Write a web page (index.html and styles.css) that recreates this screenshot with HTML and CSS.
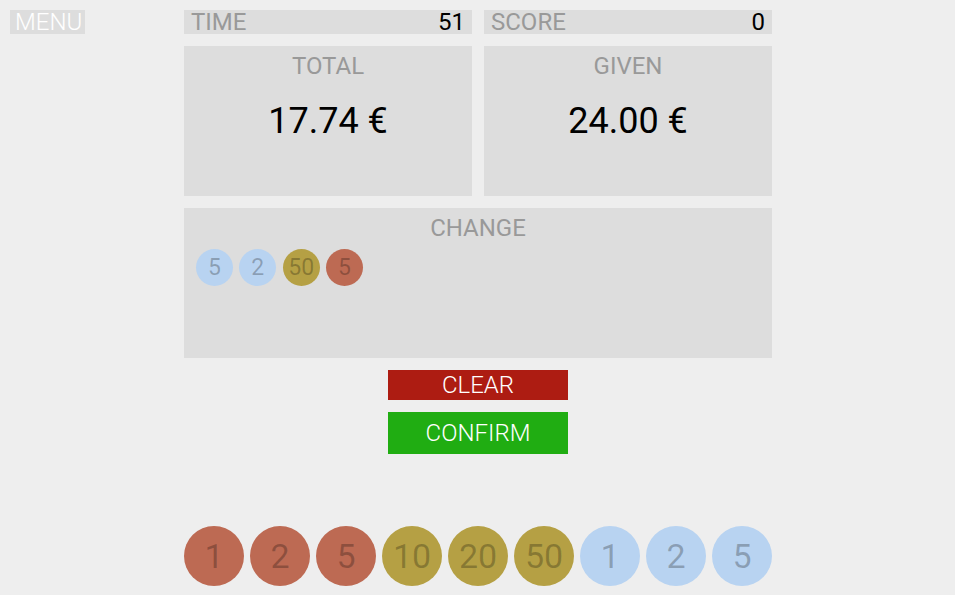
FILE: index.html
```html
<!DOCTYPE html>
<html>
<head>
<meta charset="utf-8">
<link rel="stylesheet" href="styles.css">
</head>
<body>
<div class="menu">MENU</div>
<main class="game">
  <div class="row">
    <div class="bar"><span class="bar-label">TIME</span><span class="bar-value">51</span></div>
    <div class="bar"><span class="bar-label">SCORE</span><span class="bar-value">0</span></div>
  </div>
  <div class="row">
    <div class="card">
      <div class="card-label">TOTAL</div>
      <div class="card-value">17.74 €</div>
    </div>
    <div class="card">
      <div class="card-label">GIVEN</div>
      <div class="card-value">24.00 €</div>
    </div>
  </div>
  <div class="card change">
    <div class="card-label">CHANGE</div>
    <div class="change-coins">
      <div class="coin small blue">5</div>
      <div class="coin small blue">2</div>
      <div class="coin small gold">50</div>
      <div class="coin small red">5</div>
    </div>
  </div>
  <div class="actions">
    <div class="btn clear">CLEAR</div>
    <div class="btn confirm">CONFIRM</div>
  </div>
  <div class="purse">
    <div class="coin big red">1</div>
    <div class="coin big red">2</div>
    <div class="coin big red">5</div>
    <div class="coin big gold">10</div>
    <div class="coin big gold">20</div>
    <div class="coin big gold">50</div>
    <div class="coin big blue">1</div>
    <div class="coin big blue">2</div>
    <div class="coin big blue">5</div>
  </div>
</main>
</body>
</html>
```
FILE: styles.css
```css
html, body {
  margin: 0;
  padding: 0;
  height: 100%;
}
body {
  background: #eeeeee;
  font-family: Roboto, "Liberation Sans", sans-serif;
  position: relative;
  overflow: hidden;
}
.menu {
  position: absolute;
  left: 10px;
  top: 10px;
  background: #dddddd;
  color: #ffffff;
  font-weight: 300;
  font-size: 24px;
  line-height: 24px;
  padding: 0 5px;
  width: 65px;
  box-sizing: content-box;
}
.game {
  width: 588px;
  margin: 0 auto;
  padding-top: 10px;
  display: flex;
  flex-direction: column;
  gap: 12px;
  position: relative;
  left: 0.5px;
}
.row {
  display: flex;
  gap: 12px;
}
.bar {
  flex: 1;
  height: 24px;
  background: #dddddd;
  display: flex;
  justify-content: space-between;
  padding: 0 7px;
  font-size: 24px;
  line-height: 24px;
}
.bar-label {
  color: #999999;
}
.bar-value {
  color: #000000;
}
.card {
  flex: 1;
  height: 150px;
  box-sizing: border-box;
  background: #dddddd;
  padding-top: 6px;
  text-align: center;
}
.card.change {
  flex: none;
}
.card-label {
  color: #999999;
  font-size: 24px;
  line-height: 28px;
}
.card-value {
  margin-top: 20px;
  font-size: 36px;
  line-height: 42px;
  color: #000000;
}
.change-coins {
  display: flex;
  gap: 6.33px;
  padding: 0 12px;
  margin-top: 7px;
}
.coin {
  border-radius: 50%;
  text-align: center;
  color: rgba(0, 0, 0, 0.25);
  flex: none;
}
.coin.small {
  width: 37px;
  height: 37px;
  font-size: 23px;
  line-height: 37px;
}
.coin.big {
  width: 60px;
  height: 60px;
  font-size: 34px;
  line-height: 60px;
}
.red { background: #bd6a53; }
.gold { background: #b5a044; }
.blue { background: #b8d3f1; }
.actions {
  display: flex;
  flex-direction: column;
  align-items: center;
  gap: 12px;
}
.btn {
  width: 180px;
  text-align: center;
  color: #ffffff;
  font-weight: 300;
  font-size: 24px;
}
.btn.clear {
  background: #ad1c12;
  height: 30px;
  line-height: 30px;
}
.btn.confirm {
  background: #20ad12;
  height: 42px;
  line-height: 42px;
}
.purse {
  display: flex;
  gap: 6px;
  margin-top: 60px;
}
```
